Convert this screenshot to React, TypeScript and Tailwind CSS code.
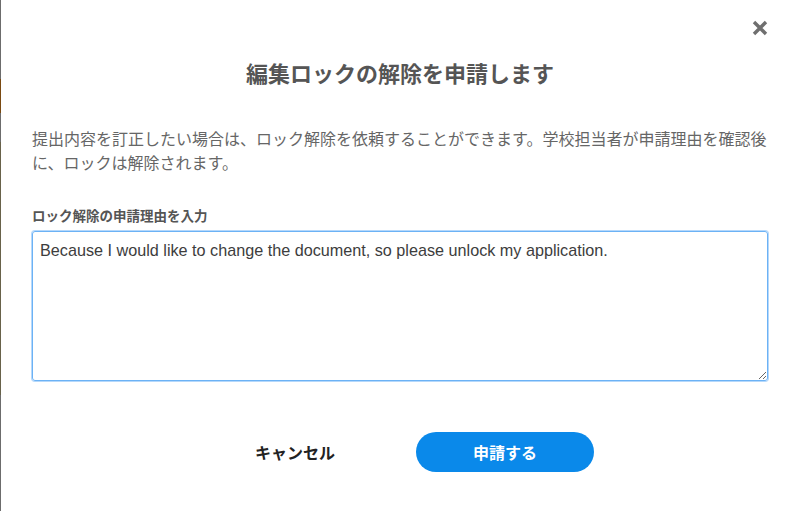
import React from "react";

const jp = { fontFamily: '"Noto Sans CJK JP", "Noto Sans", sans-serif' };

export default function App() {
  return (
    <div className="flex h-[511px] w-[799px] overflow-hidden bg-white" style={jp}>
      <div className="flex w-px flex-col">
        <div className="h-[79px] bg-[#6c6c6c]" />
        <div className="h-[34px] bg-[#7a4a12]" />
        <div className="h-[29px] bg-[#6c6c6c]" />
        <div className="h-[253px] bg-[#68624a]" />
        <div className="flex-1 bg-[#6c6c6c]" />
      </div>
      <div className="relative flex flex-1 flex-col px-[31px] pt-[57px]">
        <button className="absolute right-[31px] top-[20px] flex h-[16px] w-[16px] items-center justify-center">
          <svg width="16" height="16" viewBox="0 0 16 16">
            <path d="M2 2 L14 14 M14 2 L2 14" stroke="#6f6f6f" strokeWidth="3.4" strokeLinecap="butt" />
          </svg>
        </button>
        <h1 className="text-center text-[22px] font-bold leading-[30px] text-[#555]">
          編集ロックの解除を申請します
        </h1>
        <p className="mt-[39px] whitespace-nowrap text-[16px] leading-[24px] text-[#666]">
          提出内容を訂正したい場合は、ロック解除を依頼することができます。学校担当者が申請理由を確認後
          <br />
          に、ロックは解除されます。
        </p>
        <label className="mt-[31px] text-[13.5px] font-bold leading-[20px] text-[#555]">
          ロック解除の申請理由を入力
        </label>
        <textarea
          className="mt-[6px] h-[150px] w-full resize-y rounded-[3px] border border-[#6cb2f5] px-[7px] py-[6px] text-[16.2px] leading-[24px] text-[#3d3d3d] shadow-[0_0_0_1px_#b5d8fb] outline-none"
          style={{ fontFamily: '"Liberation Sans", Arial, sans-serif' }}
          defaultValue="Because I would like to change the document, so please unlock my application."
        />
        <div className="mt-[51px] flex justify-center gap-[32px]">
          <button className="h-[40px] w-[178px] rounded-full bg-white text-[16px] font-bold text-[#222]">
            キャンセル
          </button>
          <button className="h-[40px] w-[178px] rounded-full bg-[#0a89ea] text-[16px] font-bold text-white">
            申請する
          </button>
        </div>
      </div>
    </div>
  );
}
